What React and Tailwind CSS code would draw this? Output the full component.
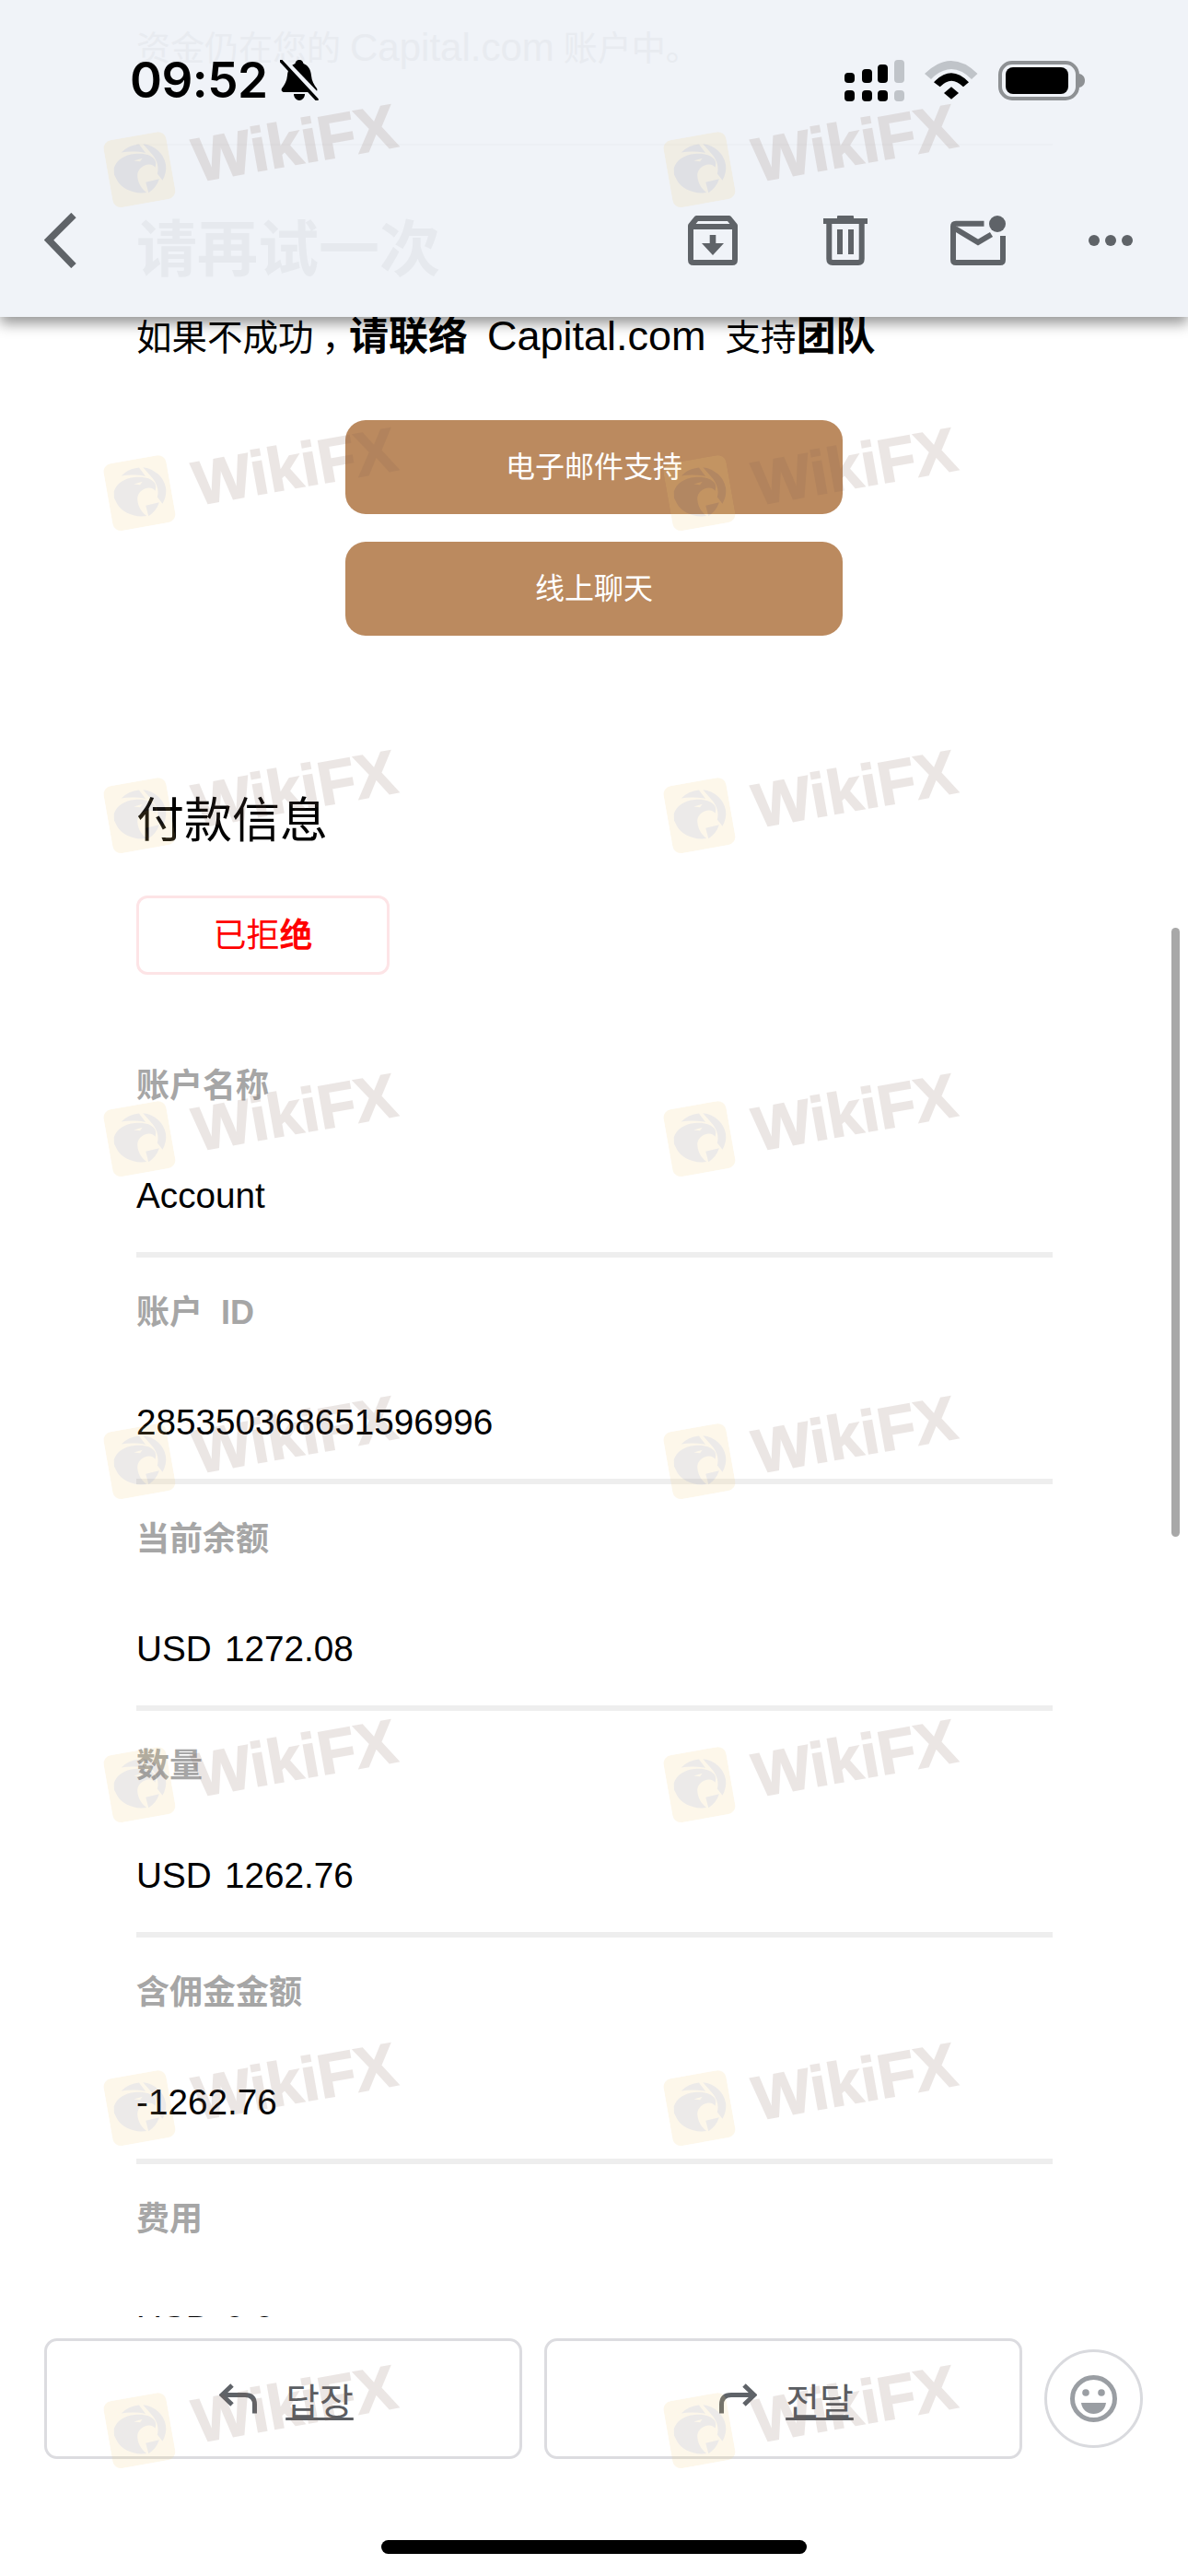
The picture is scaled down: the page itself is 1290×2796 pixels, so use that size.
const fields = [
  ["账户名称", "Account"],
  ["账户 ID", "285350368651596996"],
  ["当前余额", "USD 1272.08"],
  ["数量", "USD 1262.76"],
  ["含佣金金额", "-1262.76"],
  ["费用", "USD 0.0"],
];

function Eagle() {
  return (
    <svg width="69" height="74" viewBox="0 0 64 73" preserveAspectRatio="none" className="shrink-0">
      <rect x="0" y="0" width="64" height="73" rx="9" fill="#f5cf78" />
      <g fill="#857a75">
        <path d="M7 30C11 22 20 18 30 19C40 20 46 23 49 29C50 32 49 35 48 37C46 33 42 32 38 33C34 34 30 37 29 42C28 49 30 56 35 62C22 62 11 53 8 44L6 37Z" />
        <path d="M17 15A27 27 0 0 1 36 9.500L41 20C34 17 25 15 17 15Z" />
        <path d="M40 10A27 27 0 0 1 59 36A27 27 0 0 1 53 52L49 44C52 38 51 30 48 24Z" />
        <path d="M36 51L50 50A27 27 0 0 1 37 62.500Z" />
      </g>
      <path d="M28 26L37 25L34 28Z" fill="#f5cf78" />
    </svg>
  );
}

function Watermark() {
  return (
    <div className="flex h-[74px] w-[324px] -rotate-[10deg] items-center gap-[25px] opacity-[0.15]">
      <Eagle />
      <span className="font-['Liberation_Sans',sans-serif] text-[67px] leading-none font-bold text-[#805f52] [-webkit-text-stroke:1.500px_#805f52]">WikiFX</span>
    </div>
  );
}

function BellSlash() {
  return (
    <svg width="42" height="44" viewBox="0 0 42 44" className="shrink-0">
      <path d="M21 0C24 0 25 2 25.500 4C31 6 33.500 11 34 17C34.500 23 37 27 40 31C41 33 40 35 37 35H5C2 35 1 33 2 31C5 27 7.500 23 8 17C8.500 11 11 6 16.500 4C17 2 18 0 21 0Z" fill="#000" />
      <path d="M15 37H27C27 41 24 44 21 44C18 44 15 41 15 37Z" fill="#000" />
      <line x1="2" y1="-1" x2="44" y2="43" stroke="#f0f3f8" strokeWidth="7" />
      <line x1="1" y1="1" x2="40" y2="43" stroke="#000" strokeWidth="3.500" strokeLinecap="round" />
    </svg>
  );
}

function Signal() {
  const xs = [0, 19, 36, 54];
  const tops = [14, 10, 5, 0];
  return (
    <svg width="65" height="45" viewBox="0 0 65 45" className="shrink-0">
      {xs.map((x, i) => (
        <g key={x} fill={i === 3 ? "#c0c4c9" : "#000"}>
          <rect x={x} y={tops[i]} width="11" height={25 - tops[i]} rx="4" />
          <rect x={x} y="33" width="11" height="12" rx="4" />
        </g>
      ))}
    </svg>
  );
}

function Wifi() {
  return (
    <svg width="58" height="42" viewBox="0 0 58 42" className="shrink-0">
      <path d="M0 14Q29 -14 57.500 14L51 20Q29 -2 7 20Z" fill="#c0c4c9" />
      <path d="M10 23.300Q29 3.300 48 23.300L42 28.300Q29 15 16.700 28.300Z" fill="#000" />
      <path d="M29 28.300L37 35L29 41.700L21 35Z" fill="#000" />
    </svg>
  );
}

function Battery() {
  return (
    <svg width="94" height="43" viewBox="0 0 94 43" className="shrink-0">
      <rect x="2" y="2" width="84" height="39" rx="13" fill="none" stroke="#8e9194" strokeWidth="4" />
      <rect x="8" y="7" width="68" height="29" rx="8" fill="#000" />
      <path d="M88 14C92 15 94 18 94 21.500C94 25 92 28 88 29Z" fill="#8e9194" />
    </svg>
  );
}

function ToolbarIcons() {
  return (
    <div className="ml-auto flex items-center pr-[60px]">
      <svg width="54" height="54" viewBox="0 0 54 54" className="shrink-0">
        <path d="M3 48V11L9.500 3H44.500L51 11V48Q51 51 48 51H6Q3 51 3 48Z" fill="none" stroke="#5f6368" strokeWidth="6" strokeLinejoin="round" />
        <rect x="3" y="9" width="48" height="6" fill="#5f6368" />
        <path d="M23.700 21H30.300V30H39L27 43L15 30H23.700Z" fill="#5f6368" />
      </svg>
      <svg width="48" height="54" viewBox="0 0 48 54" className="ml-[93px] shrink-0">
        <rect x="15" y="0" width="18" height="4" rx="1" fill="#5f6368" />
        <rect x="0" y="3" width="48" height="6" fill="#5f6368" />
        <path d="M6.300 8V47Q6.300 51 10 51H38Q41.700 51 41.700 47V8" fill="none" stroke="#5f6368" strokeWidth="6" />
        <rect x="15" y="15" width="6" height="27" fill="#5f6368" />
        <rect x="27" y="15" width="6" height="27" fill="#5f6368" />
      </svg>
      <svg width="60" height="54" viewBox="0 0 60 54" className="ml-[90px] shrink-0">
        <path d="M36.500 8.700H6Q3 8.700 3 11.700V48Q3 51 6 51H54Q57 51 57 48V22" fill="none" stroke="#5f6368" strokeWidth="6" />
        <path d="M5 14L30 29L44.500 20.500" fill="none" stroke="#5f6368" strokeWidth="6" />
        <circle cx="51" cy="9" r="9" fill="#5f6368" />
      </svg>
      <svg width="48" height="12" viewBox="0 0 48 12" className="ml-[90px] shrink-0">
        <circle cx="6" cy="6" r="6" fill="#5f6368" />
        <circle cx="24" cy="6" r="6" fill="#5f6368" />
        <circle cx="42" cy="6" r="6" fill="#5f6368" />
      </svg>
    </div>
  );
}

function Header() {
  return (
    <header className="relative z-10 h-[344px] shrink-0 bg-[#f0f3f8] shadow-[0_7px_14px_rgba(0,0,0,0.42)] font-['Liberation_Sans','Noto_Sans_CJK_SC',sans-serif]">
      <div className="absolute left-[148px] top-[30px] text-[37px] leading-[44px] whitespace-nowrap text-[#e8ebf0]">
        资金仍在您的<span className="mx-[10px] text-[42px]">Capital.com</span>账户中。
      </div>
      <div className="absolute left-[148px] right-[147px] top-[156px] h-[2px] bg-[#eceff4]" />
      <div className="absolute left-[148px] top-[233px] text-[66px] leading-[76px] font-bold whitespace-nowrap text-[#e6e9ee]">请再试一次</div>
      <div className="relative flex h-[46px] translate-y-[64px] items-center justify-between pl-[141px] pr-[112px]">
        <div className="flex items-center gap-[13px]">
          <span className="font-['Inter',sans-serif] text-[53px] leading-none font-semibold tracking-[-0.5px] text-black">09:52</span>
          <BellSlash />
        </div>
        <div className="flex items-center gap-[22px]">
          <Signal />
          <Wifi />
          <Battery />
        </div>
      </div>
      <div className="relative mt-[185px] flex h-[60px] items-center pl-[48px]">
        <svg width="36" height="60" viewBox="0 0 36 60" className="shrink-0">
          <polyline points="32,2.500 5,29.500 32,57.500" fill="none" stroke="#5f6368" strokeWidth="7.500" />
        </svg>
        <ToolbarIcons />
      </div>
    </header>
  );
}

function Field({ label, value }) {
  return (
    <div className="mb-[37px]">
      <div className="h-[44px] text-[36px] leading-[46px] font-bold text-[#a6a6a6] [word-spacing:10px]">{label}</div>
      <div className="mt-[76px] h-[44px] text-[38.700px] leading-[44px] text-black [word-spacing:3.500px]">{value}</div>
      <div className="mt-[39px] h-[6px] bg-[#eeeeee]" />
    </div>
  );
}

function Content() {
  return (
    <main className="min-h-0 flex-1 overflow-hidden pl-[148px] pr-[147px] font-['Liberation_Sans','Noto_Sans_CJK_SC',sans-serif]">
      <p className="h-[44px] whitespace-nowrap text-[38.500px] leading-[42px] text-black">
        如果不成功<span className="inline-block w-[38.500px] pl-[9px]">，</span>
        <span className="text-[43px] font-bold">请联络</span>
        <span className="mx-[21px] text-[45px]">Capital.com</span>
        支持<span className="text-[43px] font-bold">团队</span>
      </p>
      <div className="mt-[68px] flex flex-col items-center gap-[30px] pr-[1px]">
        <a className="flex h-[102px] w-[540px] items-center justify-center rounded-[22px] bg-[#bb8a5f] text-[32px] text-white">电子邮件支持</a>
        <a className="flex h-[102px] w-[540px] items-center justify-center rounded-[22px] bg-[#bb8a5f] text-[32px] text-white">线上聊天</a>
      </div>
      <h2 className="mt-[170px] h-[60px] text-[52px] leading-[62px] font-normal text-black">付款信息</h2>
      <div className="mt-[52px] flex h-[86px] w-[275px] items-center justify-center rounded-[12px] border-[3px] border-[#fde4e6] pt-[2px] text-[36px] text-[#ff0000]">
        <span>已拒<span className="font-bold">绝</span></span>
      </div>
      <div className="mt-[98px]">
        {fields.map(([l, v]) => (
          <Field key={l} label={l} value={v} />
        ))}
      </div>
    </main>
  );
}

function ActionButton({ children, label }) {
  return (
    <button className="flex h-[131px] w-[519px] items-center justify-center gap-[31px] rounded-[14px] border-[3.500px] border-[#dcdce0] bg-white pl-[7px]">
      {children}
      <span className="font-['Noto_Sans_CJK_KR',sans-serif] text-[40px] leading-[44px] text-[#5a5d62] underline decoration-[3px] underline-offset-[3px]">{label}</span>
    </button>
  );
}

function Footer() {
  return (
    <footer className="h-[281px] shrink-0 bg-white pt-[23px]">
      <div className="flex items-center pl-[48px]">
        <ActionButton label="답장">
          <svg width="41" height="33" viewBox="0 0 41 33" className="shrink-0">
            <path d="M14 2L3 12.500L14 23M3 12.500H28Q38.500 12.500 38.500 23V32.500" fill="none" stroke="#5f6368" strokeWidth="5" />
          </svg>
        </ActionButton>
        <div className="w-[24px] shrink-0" />
        <ActionButton label="전달">
          <svg width="41" height="33" viewBox="0 0 41 33" className="shrink-0">
            <path d="M27 2L38 12.500L27 23M38 12.500H13Q2.500 12.500 2.500 23V32.500" fill="none" stroke="#5f6368" strokeWidth="5" />
          </svg>
        </ActionButton>
        <div className="ml-[24px] flex h-[107px] w-[107px] shrink-0 items-center justify-center rounded-full border-[3px] border-[#d9dade]">
          <svg width="51" height="51" viewBox="0 0 51 51">
            <circle cx="25.500" cy="25.500" r="23" fill="none" stroke="#9a9ea3" strokeWidth="5" />
            <circle cx="17" cy="19" r="3.800" fill="#9a9ea3" />
            <circle cx="34" cy="19" r="3.800" fill="#9a9ea3" />
            <path d="M12 30H39C38 38 32 42 25.500 42C19 42 13 38 12 30Z" fill="#9a9ea3" />
          </svg>
        </div>
      </div>
      <div className="mx-auto mt-[88px] h-[15px] w-[462px] rounded-full bg-black" />
    </footer>
  );
}

export default function App() {
  return (
    <div className="relative flex h-[2796px] w-[1290px] flex-col overflow-hidden bg-white">
      <Header />
      <Content />
      <Footer />
      <div className="absolute left-[1272px] top-[1007px] h-[661px] w-[9px] rounded-full bg-[#a8a8a8]" />
      <div className="pointer-events-none absolute left-[115px] top-[125px] z-20 grid auto-rows-[350.600px] grid-cols-[608px_608px]">
        {Array.from({ length: 16 }).map((_, i) => (
          <Watermark key={i} />
        ))}
      </div>
    </div>
  );
}
